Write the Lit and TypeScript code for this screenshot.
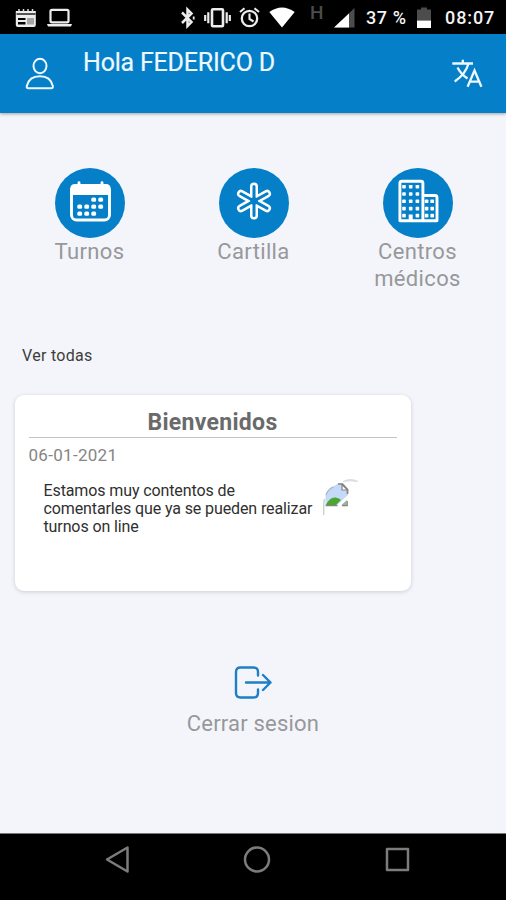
import { LitElement, html, css, svg } from "lit";
import { customElement } from "lit/decorators.js";

const calendarDots: number[][] = [
  [38.5, 31.5], [45.5, 31.5],
  [24.5, 38.5], [31.5, 38.5], [38.5, 38.5], [45.5, 38.5],
  [24.5, 45.5], [31.5, 45.5], [38.5, 45.5],
];

const towerRows = [18.7, 26, 33.3, 40.6, 47.6];
const towerColumns = [21, 27.7, 34.4];

@customElement("status-bar")
class StatusBar extends LitElement {
  static styles = css`
    :host {
      display: flex;
      align-items: center;
      height: 34px;
      flex: none;
      background: #000;
      color: #f4f4f4;
      font: 500 18px/34px Roboto, sans-serif;
      box-sizing: border-box;
      padding: 1px 0 0 15px;
      white-space: pre;
    }
    svg { display: block; flex: none; overflow: visible; }
    .laptop { margin-left: 10px; }
    .bt { margin-left: 109px; }
    .vib { margin-left: 8px; }
    .alarm { margin-left: 8px; }
    .wifi { margin-left: 9px; }
    .net { margin: -9px 0 0 15px; width: 24px; color: #4c4c4c; font-size: 19px; }
    .pct { margin-left: 10px; width: 51px; letter-spacing: 0.6px; }
    .clock { margin-left: 14px; letter-spacing: 0.9px; }
  `;
  render() {
    return html`
      <svg width="22" height="20" viewBox="0 0 22 20">
        <path d="M.8 3h20v14a2 2 0 0 1-2 2h-16a2 2 0 0 1-2-2z" fill="#ececec" />
        <path d="M1.500 6h19" stroke="#000" stroke-width="1.300" />
        <path d="M3 10h7.500v2H3zM3 14h7.500v2.500H3z" fill="#000" />
        <path d="M12 10h7v6.500h-7z" fill="#a5a5a5" />
        <path d="M4 1v2.500M8.500 1v2.500M13 1v2.500M17.500 1v2.500" stroke="#ddd" stroke-width="1.500" />
      </svg>
      <svg class="laptop" width="25" height="20" viewBox="0 0 25 20">
        <rect x="3.500" y="1.800" width="18" height="12.500" rx="1.500" fill="none" stroke="#ececec" stroke-width="2.200" />
        <path d="M0 16h25l-1 2.500H1z" fill="#ececec" />
      </svg>
      <svg class="bt" width="15" height="22" viewBox="0 0 15 22">
        <path d="M1 5.500l9.500 9.500L6.500 19V2.500l4 4L1 16" fill="none" stroke="#ececec" stroke-width="2.500" />
        <path d="M12.700 9.500v3" stroke="#ececec" stroke-width="1.800" />
      </svg>
      <svg class="vib" width="27" height="20" viewBox="0 0 27 20">
        <rect x="8" y="1.200" width="11" height="17" rx="1" fill="none" stroke="#ececec" stroke-width="2.600" />
        <path d="M4.300 4.300v11M22.700 4.300v11M1.200 7v6M25.800 7v6" stroke="#ececec" stroke-width="2.200" />
      </svg>
      <svg class="alarm" width="21" height="22" viewBox="0 0 21 22">
        <circle cx="10.500" cy="11.500" r="7.700" fill="none" stroke="#ececec" stroke-width="2.300" />
        <path d="M10.500 6.500v5.500l4 2.500M1 5l4.500-3.700M20 5l-4.500-3.700" fill="none" stroke="#ececec" stroke-width="2.100" />
      </svg>
      <svg class="wifi" width="26" height="22" viewBox="0 0 26 22">
        <path d="M.3 5Q13-4 25.700 5L13 20.500z" fill="#fff" />
      </svg>
      <span class="net">H</span>
      <svg width="22" height="20" viewBox="0 0 22 20">
        <path d="M0 19.500L20.500 0v19.500z" fill="#4c4c4c" />
        <path d="M0 19.500L15 5.500v14z" fill="#fff" />
      </svg>
      <span class="pct">37 %</span>
      <svg width="14" height="22" viewBox="0 0 14 22">
        <path d="M0 2.500h4V.5h6v2h4v11H0z" fill="#4c4c4c" />
        <path d="M0 13.500h14v7.500H0z" fill="#fff" />
      </svg>
      <span class="clock">08:07</span>
    `;
  }
}

@customElement("app-header")
class AppHeader extends LitElement {
  static styles = css`
    :host {
      display: flex;
      align-items: flex-start;
      flex: none;
      height: 79px;
      box-sizing: border-box;
      padding: 0 23px 0 25px;
      background: #047fc8;
      color: #eef8ff;
      box-shadow: 0 1px 3px rgba(0, 0, 0, 0.35);
      font: 400 25px/30px Roboto, sans-serif;
    }
    svg { display: block; overflow: visible; fill: none; stroke: #eef8ff; }
    .user { margin-top: 23px; stroke-width: 2; }
    .name { margin: 13px auto 0 29px; letter-spacing: -0.2px; padding-top: 0.5px; -webkit-text-stroke: 0.2px #eef8ff; }
    .lang { margin-top: 24px; stroke-width: 2.3; }
  `;
  render() {
    return html`
      <svg class="user" width="29" height="33" viewBox="0 0 29 33">
        <ellipse cx="15" cy="9" rx="6.500" ry="7.200" />
        <path d="M3.500 31.200C1.800 31.200 1.500 30.300 1.800 29C3.300 22.500 8.500 19.300 15 19.300S26.300 22.500 27.800 29C28.100 30.300 27.700 31.200 26.100 31.200Z" />
      </svg>
      <span class="name">Hola FEDERICO D</span>
      <svg class="lang" width="31" height="30" viewBox="0 0 31 30">
        <path d="M.3 5.500H21M10.800 1.800v4M16.500 5.500C14.500 13 10 18.500 2.700 23.500M5.500 9.500C8 14.500 11 17.500 15.500 20.500" />
        <path d="M15.600 28.800L22.500 12.500l6.900 16.300M18 23.700h9" />
      </svg>
    `;
  }
}

@customElement("menu-tile")
class MenuTile extends LitElement {
  static properties = { label: {}, icon: {} };
  declare label: string;
  declare icon: string;
  static styles = css`
    :host {
      display: flex;
      flex-direction: column;
      align-items: center;
      width: 110px;
      text-align: center;
      color: #97989b;
      font: 400 22px/27px Roboto, sans-serif;
      letter-spacing: 0.35px;
    }
    svg { display: block; }
    .disc { fill: #047fc8; }
    .line { fill: none; stroke: #fff; stroke-width: 2.9; stroke-linejoin: round; }
    .solid { fill: #fff; }
    .arms { fill: none; stroke: #fff; stroke-width: 8; stroke-linecap: round; }
    .core { fill: #047fc8; stroke: #047fc8; stroke-width: 3; stroke-linecap: round; }
  `;
  private window(x: number, y: number) {
    return svg`<rect class="solid" x=${x - 1.8} y=${y - 1.8} width="3.6" height="3.6" rx=".7" />`;
  }
  private glyph() {
    if (this.icon === "calendar") {
      return svg`
        <rect class="line" x="16.500" y="17.500" width="38" height="34.500" rx="5" />
        <path class="solid" d="M15.200 27v-6q0-5 5-5h30.500q5 0 5 5v6z" />
        <path class="line" d="M24 14.800v3M47 14.800v3" stroke-linecap="round" />
        ${calendarDots.map(([x, y]) => svg`<rect class="solid" x=${x - 2.2} y=${y - 2} width="4.800" height="4.200" rx="1.500" />`)}`;
    }
    if (this.icon === "star") {
      const arms = "M35 18.500v29M22 25.750l26 14.500M22 40.250l26-14.500";
      return svg`
        <path class="arms" d=${arms} />
        <path class="core" d=${arms} />
        <circle class="core" cx="35" cy="33" r="2.200" />`;
    }
    return svg`
      <path class="line" d="M16.900 52.700V15.200q0-2 2-2h19q2 0 2 2v37.500zM40 27.500h12q2 0 2 2v23.200H40" />
      ${towerRows.map((y) => towerColumns.map((x) =>
        x === 27.7 && y === 47.6 ? svg`<rect class="solid" x="25.700" y="46.500" width="4" height="6" />` : this.window(x, y)))}
      ${towerRows.slice(2).map((y) => [43.6, 49.2].map((x) => this.window(x, y)))}`;
  }
  render() {
    return html`
      <svg width="70" height="70" viewBox="0 0 70 70">
        <circle class="disc" cx="35" cy="35" r="35" />
        ${this.glyph()}
      </svg>
      <span>${this.label}</span>
    `;
  }
}

@customElement("news-card")
class NewsCard extends LitElement {
  static styles = css`
    :host {
      display: block;
      width: 396px;
      height: 196px;
      box-sizing: border-box;
      padding: 13px 14px 0;
      border-radius: 9px;
      background: #fff;
      box-shadow: 0 1px 4px rgba(0, 0, 0, 0.16);
      font-family: Roboto, sans-serif;
    }
    .title {
      height: 30px;
      box-sizing: border-box;
      border-bottom: 1px solid #c4c4c4;
      text-align: center;
      font: 700 23px/29px Roboto, sans-serif;
      letter-spacing: 0.3px;
      color: #6a6a6a;
    }
    .date { margin-top: 6px; font-size: 17px; line-height: 22px; letter-spacing: 0.3px; color: #858585; }
    .body { display: flex; padding: 16px 0 0 15px; }
    .text { width: 279px; font-size: 16px; line-height: 18px; letter-spacing: -0.11px; color: #303030; white-space: pre; }
    svg { display: block; margin-top: -4px; }
  `;
  render() {
    return html`
      <div class="title">Bienvenidos</div>
      <div class="date">06-01-2021</div>
      <div class="body">
        <div class="text">Estamos muy contentos de
comentarles que ya se pueden realizar
turnos on line</div>
        <svg width="38" height="38" viewBox="0 0 38 38">
          <path d="M2.500 27V17Q5 10 11 8l4-2.500h5l5 5.500v6L14 27z" fill="#c5d9f8" />
          <path d="M3 17Q5 11 10.500 9" fill="none" stroke="#a9b1bd" stroke-width="1.200" />
          <path d="M15 6h4.500l5 5.500V16M24 23v4.500h-5M2.500 27.500h12" fill="none" stroke="#858585" stroke-width="1.700" />
          <path d="M19 6.500v5.500h5.500z" fill="#fff" stroke="#858585" stroke-width="1.200" />
          <path d="M3 27q3.500-8 9.500-7.500 4 .5 5.500 2.500l-5 5z" fill="#4ca62f" />
          <path d="M18.500 27l5.500-5v5z" fill="#9bb39c" />
          <path d="M.7 37V28Q.7 24 1.500 21" fill="none" stroke="#cfcfcf" stroke-width="1.400" />
          <path d="M20 3.500q7-4 15 0-8-1.500-15 0z" fill="#d6d6d6" stroke="#dedede" />
        </svg>
      </div>
    `;
  }
}

@customElement("app-root")
class AppRoot extends LitElement {
  static styles = css`
    :host {
      display: flex;
      flex-direction: column;
      height: 900px;
      overflow: hidden;
      background: #f3f5fa;
      font-family: Roboto, sans-serif;
    }
    main { flex: 1; display: flex; flex-direction: column; }
    .tiles { display: flex; justify-content: space-between; padding: 55px 33.500px 0 34.500px; height: 179px; box-sizing: border-box; }
    .all { padding: 53px 0 0 22px; font-size: 16px; line-height: 22px; letter-spacing: 0.3px; color: #3c3c3c; }
    .card { margin: 28px 0 0 14.500px; }
    .logout {
      display: flex;
      flex-direction: column;
      align-items: center;
      margin-top: 75px;
      color: #97989b;
      font-size: 22px;
      line-height: 28px;
      letter-spacing: 0.2px;
    }
    .logout svg { display: block; margin-bottom: 11px; fill: none; stroke: #1d7fc6; stroke-width: 2.4; stroke-linecap: round; stroke-linejoin: round; }
    nav {
      flex: none;
      display: flex;
      height: 67px;
      box-sizing: border-box;
      border-top: 1px solid #77787b;
      background: #000;
      padding: 11px 95px 0 105px;
      justify-content: space-between;
    }
    nav svg { fill: none; stroke: #7c7c7c; stroke-width: 2.5; stroke-linejoin: round; }
  `;
  render() {
    return html`
      <status-bar></status-bar>
      <app-header></app-header>
      <main>
        <div class="tiles">
          <menu-tile label="Turnos" icon="calendar"></menu-tile>
          <menu-tile label="Cartilla" icon="star"></menu-tile>
          <menu-tile label="Centros médicos" icon="building"></menu-tile>
        </div>
        <div class="all">Ver todas</div>
        <news-card class="card"></news-card>
        <div class="logout">
          <svg width="38" height="33" viewBox="0 0 38 33">
            <path d="M24 9.500V6q0-4.500-4.500-4.500H6.500Q2 1.500 2 6v21q0 4.500 4.500 4.500h13q4.500 0 4.500-4.500v-3.500M12 16.500H36.500M29 9l7.500 7.500-7.500 7.500" />
          </svg>
          <span>Cerrar sesion</span>
        </div>
      </main>
      <nav>
        <svg width="26" height="28" viewBox="0 0 26 28"><path d="M2 14.500L22.500 2.500v24z" /></svg>
        <svg width="28" height="28" viewBox="0 0 28 28"><circle cx="14" cy="14.500" r="12" /></svg>
        <svg width="28" height="28" viewBox="0 0 28 28"><rect x="4" y="4" width="21" height="21" /></svg>
      </nav>
    `;
  }
}
